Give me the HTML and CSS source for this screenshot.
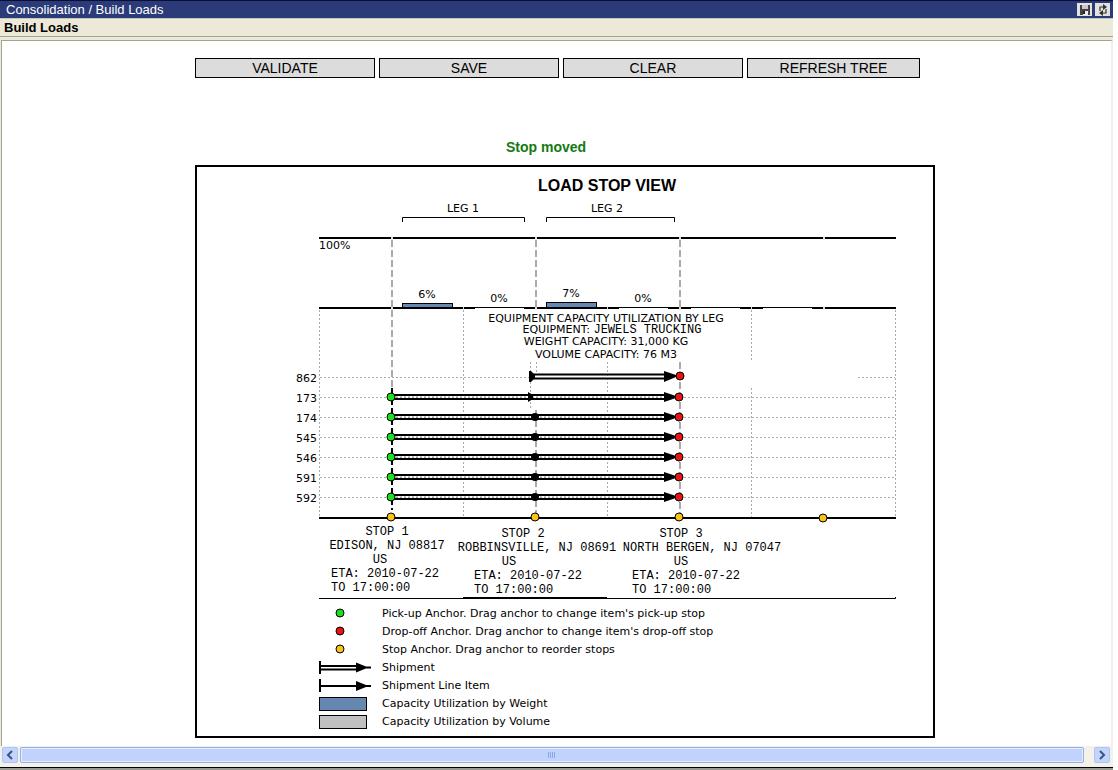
FILE: index.html
```
<!DOCTYPE html>
<html lang="en">
<head>
<meta charset="utf-8">
<title>Consolidation / Build Loads</title>
<link rel="stylesheet" href="styles.css">
</head>
<body>
<div class="shell">
  <header class="titlebar">
    <span class="crumbs">Consolidation / Build Loads</span>
    <div class="tools">
      <button class="tool" type="button" aria-label="Save layout">
        <svg width="14" height="12" viewBox="0 0 14 12"><path d="M2 1h10v10H2z" fill="#444"/><path d="M4 1h6v4H4z" fill="#c9c9c9"/><path d="M5 7h5v4H5z" fill="#eee"/><path d="M5 7h2v3H5z" fill="#222"/></svg>
      </button>
      <button class="tool" type="button" aria-label="Refresh">
        <svg width="14" height="12" viewBox="0 0 14 12" fill="none" stroke="#333" stroke-width="1.2"><path d="M4 7V3h4M10 5v4H6"/><path d="M7 0l4 3-4 3zM7 6L3 9l4 3z" fill="#333" stroke="none"/></svg>
      </button>
    </div>
  </header>
  <h1 class="subtitle">Build Loads</h1>
  <main class="workspace">
    <div class="actions">
      <button class="action" type="button">VALIDATE</button>
      <button class="action" type="button">SAVE</button>
      <button class="action" type="button">CLEAR</button>
      <button class="action action-last" type="button">REFRESH TREE</button>
    </div>
    <p class="status">Stop moved</p>
    <section class="panel">
      <h2 class="panel-title">LOAD STOP VIEW</h2>
      <svg class="chart" viewBox="197 197 736 404" role="img" aria-label="Load stop view">
        <defs>
          <g id="ship">
            <path d="M391 -2H666M391 2H666" stroke="#000" stroke-width="2"/>
            <path d="M392 0H666" stroke="#999" stroke-dasharray="2 2"/>
            <path d="M664 -5l12 4v2l-12 4z"/>
            <circle cx="679" r="4" class="drop"/>
          </g>
          <g id="full"><use href="#ship"/><circle cx="535" r="4"/><circle cx="391" r="4" class="pick"/></g>
        </defs>

        <g class="label mid">
          <text x="463" y="212">LEG 1</text><text x="607" y="212">LEG 2</text>
          <text x="427" y="298">6%</text><text x="499" y="302">0%</text>
          <text x="571" y="297">7%</text><text x="643" y="302">0%</text>
        </g>
        <text class="label" x="319" y="249">100%</text>
        <path class="thin" d="M402.500 222v-4.500H524.500v4.500M546.500 222v-4.500H674.500v4.500"/>
        <path class="thick" d="M319 238H896M319 308H896M319 518H896"/>
        <path d="M475 308.500H524M619 308.500H668M691 308.500H740M763 308.500H812" stroke="#fff"/>
        <path d="M391 238h2M535 238h2M679 238h2M823 238h2M391 308h2M535 308h2M679 308h2M823 308h2M463 308h1M607 308h1M751 308h1" stroke="#ddd" stroke-width="3"/>

        <path class="grid" d="M319.500 310V517M463.500 310V517M607.500 362V517M751.500 310V362M751.500 388V517M895.500 310V517M320 377.500H530M858 377.500H895M320 397.500H895M320 417.500H895M320 437.500H895M320 457.500H895M320 477.500H895M320 497.500H895"/>
        <path class="stopline" d="M392 240V388M536 240V310M680 240V310M536 410V515M680 362V515"/>
        <path d="M392 388V510" stroke="#000" stroke-width="2" stroke-dasharray="17 3"/>
        <path class="grid" d="M530.500 362V408M536.500 362V374"/>
        <rect class="weight" x="402.500" y="303.500" width="50" height="4"/>
        <rect class="weight" x="546.500" y="302.500" width="50" height="5"/>

        <g class="label mid">
          <text x="606" y="322">EQUIPMENT CAPACITY UTILIZATION BY LEG</text>
          <text x="612" y="333">EQUIPMENT: <tspan class="mono">JEWELS TRUCKING</tspan></text>
          <text x="606" y="345">WEIGHT CAPACITY: 31,000 KG</text>
          <text x="606" y="358">VOLUME CAPACITY: 76 M3</text>
        </g>
        <g class="label end">
          <text x="317" y="382">862</text><text x="317" y="402">173</text><text x="317" y="422">174</text>
          <text x="317" y="442">545</text><text x="317" y="462">546</text><text x="317" y="482">591</text><text x="317" y="502">592</text>
        </g>

        <path d="M531 374.500H666M531 378.500H666" stroke="#000" stroke-width="2"/>
        <path d="M529 371h2l4 4v3l-4 4h-2zM664 371l12 4v2l-12 5z"/>
        <circle cx="680" cy="376" r="4" class="drop"/>
        <g transform="translate(0 397)"><use href="#ship"/><path d="M528-5l5 3v4l-5 3z"/><circle cx="391" r="4" class="pick"/></g>
        <use href="#full" y="417"/><use href="#full" y="437"/><use href="#full" y="457"/><use href="#full" y="477"/><use href="#full" y="497"/>
        <g class="stop"><circle cx="391" cy="517" r="4"/><circle cx="535" cy="517" r="4"/><circle cx="679" cy="517" r="4"/><circle cx="823" cy="518" r="4"/></g>

        <g class="mono mid">
          <text x="387" y="535">STOP 1</text><text x="387" y="549">EDISON, NJ 08817</text><text x="380" y="563">US</text>
          <text x="523" y="537">STOP 2</text><text x="537" y="551">ROBBINSVILLE, NJ 08691</text><text x="509" y="565">US</text>
          <text x="681" y="537">STOP 3</text><text x="702" y="551">NORTH BERGEN, NJ 07047</text><text x="681" y="565">US</text>
        </g>
        <g class="mono">
          <text x="331" y="577">ETA: 2010-07-22</text><text x="331" y="591">TO 17:00:00</text>
          <text x="474" y="579">ETA: 2010-07-22</text><text x="474" y="593">TO 17:00:00</text>
          <text x="632" y="579">ETA: 2010-07-22</text><text x="632" y="593">TO 17:00:00</text>
        </g>
        <path class="thin" d="M319 598.500H895.500V597M463 597.500H607"/>
      </svg>
      <ul class="legend">
        <li><svg class="key" viewBox="0 0 52 16"><circle cx="21" cy="7" r="4" class="pick"/></svg>Pick-up Anchor. Drag anchor to change item's pick-up stop</li>
        <li><svg class="key" viewBox="0 0 52 16"><circle cx="21" cy="7" r="4" class="drop"/></svg>Drop-off Anchor. Drag anchor to change item's drop-off stop</li>
        <li><svg class="key" viewBox="0 0 52 16"><g class="stop"><circle cx="21" cy="7" r="4"/></g></svg>Stop Anchor. Drag anchor to reorder stops</li>
        <li><svg class="key" viewBox="0 0 52 16"><path d="M1 1v13M1 6h40M1 9.500h40" stroke="#000" stroke-width="2"/><path d="M37 2.500l10 4h5v2h-5l-10 4z"/></svg>Shipment</li>
        <li><svg class="key" viewBox="0 0 52 16"><path d="M1 1v13M1 8h40" stroke="#000" stroke-width="2"/><path d="M37 3l10 4h5v2h-5l-10 4z"/></svg>Shipment Line Item</li>
        <li><svg class="key" viewBox="0 0 52 16"><rect class="weight" x=".5" y="1.500" width="47" height="13"/></svg>Capacity Utilization by Weight</li>
        <li><svg class="key" viewBox="0 0 52 16"><rect class="volume" x=".5" y="1.500" width="47" height="13"/></svg>Capacity Utilization by Volume</li>
      </ul>
    </section>
  </main>
  <div class="scrollbar">
    <button class="arrow" type="button" aria-label="Scroll left"><svg width="8" height="10" viewBox="0 0 8 10"><path d="M6 1L2 5l4 4"/></svg></button>
    <div class="track"><div class="thumb"><svg width="8" height="8" viewBox="0 0 8 8"><path d="M.5 1v6M2.500 1v6M4.500 1v6M6.500 1v6" stroke="#8ca8e0"/></svg></div></div>
    <button class="arrow" type="button" aria-label="Scroll right"><svg width="8" height="10" viewBox="0 0 8 10"><path d="M2 1l4 4-4 4"/></svg></button>
  </div>
</div>
</body>
</html>
```
FILE: styles.css
```
* { box-sizing: border-box; }
body { margin: 0; background: #fff; color: #000; font-family: "Liberation Sans", Arial, sans-serif; }
button { font: inherit; padding: 0; margin: 0; border: 0; border-radius: 0; }
.shell {
  display: flex; flex-direction: column; min-height: 100vh; margin-right: 5px;
  background: #ece9d8; border-bottom: 2px solid #9b9a90;
}
.titlebar {
  display: flex; align-items: center; justify-content: space-between;
  height: 19px; padding: 0 3px 0 6px;
  background: #2b3a78; border-top: 1px solid #0a0f30; border-bottom: 1px solid #c9c7bc; color: #fff;
}
.crumbs { padding-top: 1px; font-size: 13px; line-height: 16px; }
.tools { display: flex; gap: 3px; }
.tool { display: flex; align-items: center; justify-content: center; width: 15px; height: 13px; background: #e4e2dc; }
.subtitle {
  margin: 0 0 3px; padding: 1px 4px 0; font-size: 13px; line-height: 16px; font-weight: bold;
  border-bottom: 1px solid #a5a493;
}
.workspace {
  flex: 1; margin-left: 1px; padding: 17px 176px 8px 193px; background: #fff;
  border: 1px solid #a5a493; border-width: 1px 2px 0 1px; border-right-color: #f1efe8;
}
.actions { display: flex; gap: 4px; padding-right: 15px; }
.action {
  flex: 180; height: 20px; background: #dcdcdc; border: 1px solid #000;
  font-size: 14px; line-height: 18px;
}
.action-last { flex: 173; }
.status { margin: 60px 38px 8px 0; font-size: 14px; line-height: 19px; font-weight: bold; color: #117a11; text-align: center; }
.panel { border: 2px solid #000; }
.panel-title { margin: 0; padding: 8px 0 1px 84px; font-size: 16px; line-height: 21px; text-align: center; }
.chart { display: block; width: 100%; height: auto; }
.label { font-family: "DejaVu Sans", Verdana, sans-serif; font-size: 11px; }
.mono { font-family: "Liberation Mono", "Courier New", monospace; font-size: 12px; }
.mid { text-anchor: middle; }
.end { text-anchor: end; }
.thin { fill: none; stroke: #000; }
.thick { stroke: #000; stroke-width: 2; }
.grid { stroke: #aaa; stroke-dasharray: 2 2; }
.stopline { stroke: #aaa; stroke-width: 2; stroke-dasharray: 7 3; }
.pick { fill: #1be01b; stroke: #000; }
.drop { fill: #e81414; stroke: #000; }
.stop { fill: #f5c51b; stroke: #000; }
.weight { fill: #6688b0; stroke: #000; }
.volume { fill: #c0c0c0; stroke: #000; }
.legend {
  list-style: none; margin: 0; padding: 4px 0 5px 122px;
  font-family: "DejaVu Sans", Verdana, sans-serif; font-size: 11px; line-height: 18px;
}
.legend li { display: flex; align-items: center; gap: 11px; height: 18px; }
.key { width: 52px; height: 16px; }
.scrollbar { display: flex; height: 22px; padding: 1px 3px 4px 2px; background: #f2f1ea; border-bottom: 1px solid #000; }
.arrow {
  display: flex; align-items: center; justify-content: center; width: 16px; height: 16px;
  background: #c3d5fd; border: 1px solid #b0c4f0; border-radius: 2px;
}
.arrow path { fill: none; stroke: #3d5185; stroke-width: 2; }
.track { flex: 1; padding: 0 10px 0 2px; }
.thumb {
  display: flex; align-items: center; justify-content: center; height: 16px;
  background: #c1d3fc; border: 1px solid #98b0e0; border-radius: 2px; box-shadow: inset 0 0 0 1px #e6eeff;
}
```
